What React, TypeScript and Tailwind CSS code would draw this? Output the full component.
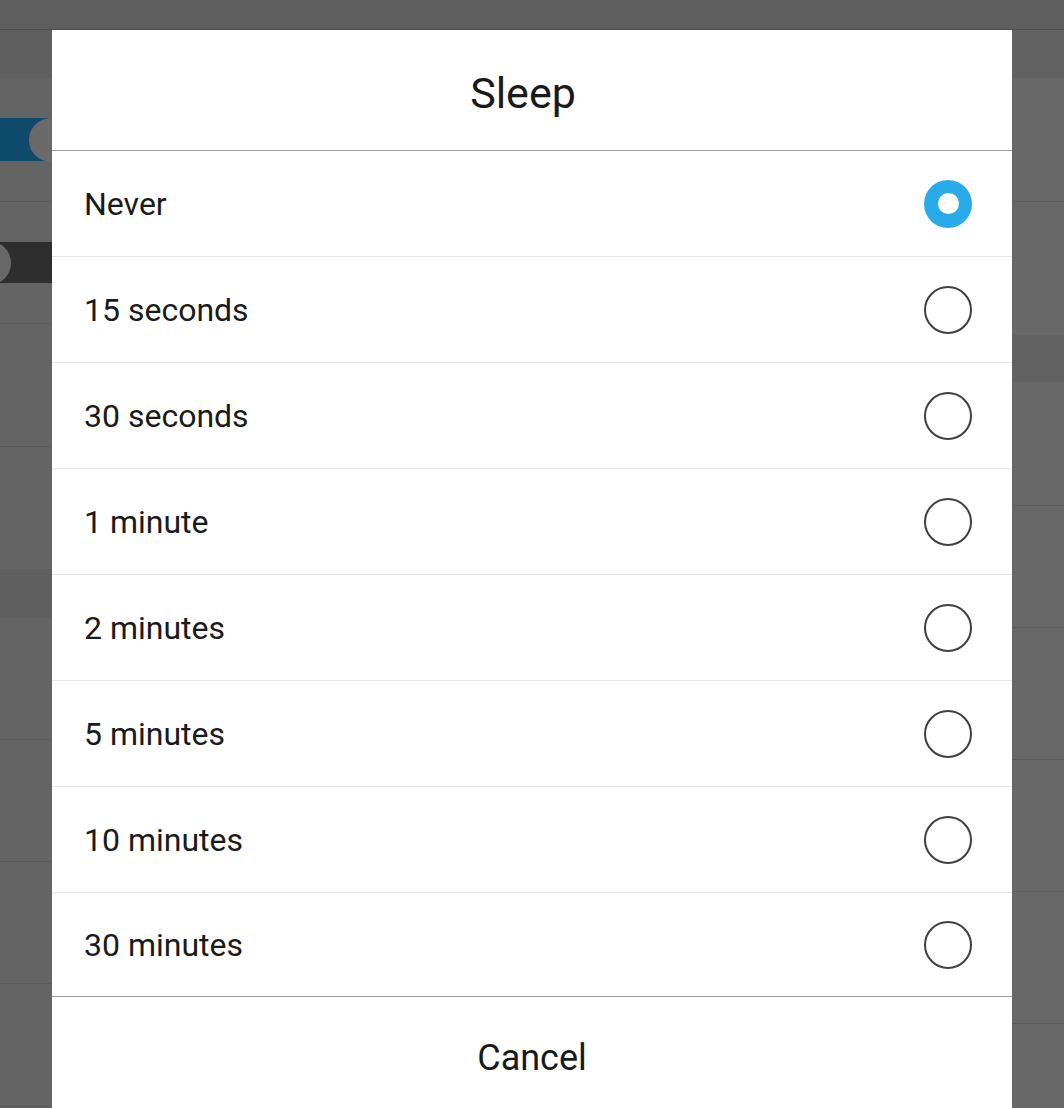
import React, { useState } from 'react';

const options = [
  'Never',
  '15 seconds',
  '30 seconds',
  '1 minute',
  '2 minutes',
  '5 minutes',
  '10 minutes',
  '30 minutes',
];

// dimmed settings screen behind the dialog
const Background = () => (
  <div className="flex flex-col h-full">
    <div className="h-[30px] flex-shrink-0 bg-[#5e5e5e] border-b border-[#4f4f4f]" />
    <div className="flex flex-1 min-h-0">
      <div className="w-[140px] flex-shrink-0 overflow-hidden bg-[#646464]">
        <div className="h-[48px] bg-[#5f5f5f]" />
        <div className="h-[124px] border-b border-[#5a5a5a] flex items-center justify-end pr-[67px]">
          <div className="w-[100px] h-[43px] flex-shrink-0 rounded-full bg-[#0e4a6b] flex items-center justify-end">
            <div className="w-[44px] h-[44px] rounded-full bg-[#6a6a6a]" />
          </div>
        </div>
        <div className="h-[122px] border-b border-[#5a5a5a] flex items-center justify-end pr-[67px]">
          <div className="w-[106px] h-[41px] flex-shrink-0 rounded-full bg-[#2e2e2e] flex items-center">
            <div className="w-[44px] h-[44px] rounded-full bg-[#686868]" />
          </div>
        </div>
        <div className="h-[123px] border-b border-[#5a5a5a]" />
        <div className="h-[122px]" />
        <div className="h-[48px] bg-[#5f5f5f]" />
        <div className="h-[123px] border-b border-[#5a5a5a]" />
        <div className="h-[122px] border-b border-[#5a5a5a]" />
        <div className="h-[122px] border-b border-[#5a5a5a]" />
        <div className="h-[123px] border-b border-[#5a5a5a]" />
      </div>
      <div className="flex-1 bg-[#686868]">
        <div className="h-[48px] bg-[#626262]" />
        <div className="h-[124px] border-b border-[#5c5c5c]" />
        <div className="h-[133px]" />
        <div className="h-[47px] bg-[#626262]" />
        <div className="h-[124px] border-b border-[#5c5c5c]" />
        <div className="h-[122px] border-b border-[#5c5c5c]" />
        <div className="h-[132px] border-b border-[#5c5c5c]" />
        <div className="h-[132px] border-b border-[#5c5c5c]" />
        <div className="h-[132px] border-b border-[#5c5c5c]" />
      </div>
    </div>
  </div>
);

const Radio = ({ checked }: { checked: boolean }) =>
  checked ? (
    <div className="w-12 h-12 rounded-full bg-[#2aabe9] flex items-center justify-center flex-shrink-0">
      <div className="w-[21px] h-[21px] rounded-full bg-white" />
    </div>
  ) : (
    <div className="w-12 h-12 rounded-full border-2 border-[#3f3f3f] flex-shrink-0" />
  );

export default function App() {
  const [selected, setSelected] = useState(0);

  return (
    <div className="relative w-[1064px] h-[1108px] overflow-hidden bg-[#666666] font-['Roboto','Noto_Sans',sans-serif]">
      <Background />

      <div className="absolute left-[52px] top-[30px] w-[960px] bg-white">
        <div className="h-[121px] border-b border-[#9e9e9e] flex items-center justify-center pr-[18px] pt-[6px]">
          <h2 className="text-[43px] leading-none text-[#1a1a1a]">Sleep</h2>
        </div>

        {options.map((label, i) => {
          const last = i === options.length - 1;
          return (
            <div
              key={label}
              onClick={() => setSelected(i)}
              className={
                last
                  ? 'h-[103px] flex items-center justify-between pl-[32px] pr-[40px] cursor-pointer'
                  : 'h-[106px] border-b border-[#e6e6e6] flex items-center justify-between pl-[32px] pr-[40px] cursor-pointer'
              }
            >
              <span className="text-[32px] leading-none text-[#1a1a1a]">{label}</span>
              <Radio checked={selected === i} />
            </div>
          );
        })}

        <button className="w-full h-[123px] border-t border-[#9e9e9e] flex items-center justify-center">
          <span className="text-[36px] leading-none text-[#1a1a1a]">Cancel</span>
        </button>
      </div>
    </div>
  );
}
